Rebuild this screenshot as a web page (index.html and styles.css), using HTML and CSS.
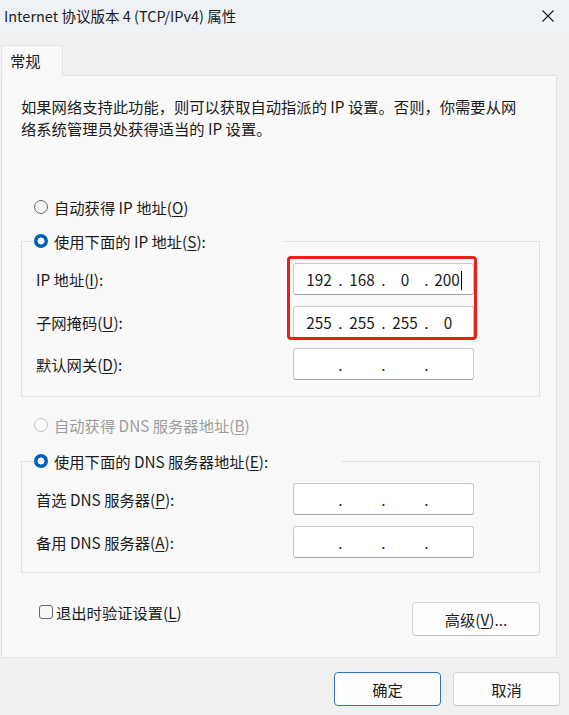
FILE: index.html
```html
<!DOCTYPE html>
<html lang="zh-CN">
<head>
<meta charset="utf-8">
<title>Internet 协议版本 4 (TCP/IPv4) 属性</title>
<link rel="stylesheet" href="styles.css">
</head>
<body>
<div class="window">
  <div class="titlebar">
    <span class="title">Internet 协议版本 4 (TCP/IPv4) 属性</span>
    <svg class="close" width="14" height="14" viewBox="0 0 14 14"><path d="M1.5 1.5 L12.5 12.5 M12.5 1.5 L1.5 12.5" stroke="#1b1b1b" stroke-width="1.1" fill="none"/></svg>
  </div>
  <div class="content">
    <div class="tabs"><div class="tab">常规</div></div>
    <div class="panel">
      <p class="desc">如果网络支持此功能，则可以获取自动指派的 IP 设置。否则，你需要从网络系统管理员处获得适当的 IP 设置。</p>

      <div class="radio first"><span class="rb"></span>自动获得 IP 地址(<u>O</u>)</div>

      <div class="group ipgroup">
        <div class="legend lg1"><span class="rb on"></span>使用下面的 IP 地址(<u>S</u>):</div>
        <div class="rows">
          <span class="lbl">IP 地址(<u>I</u>):</span>
          <div class="ip"><span class="oct">192</span><span class="dt">.</span><span class="oct">168</span><span class="dt">.</span><span class="oct">0</span><span class="dt">.</span><span class="oct">200<span class="caret"></span></span></div>
          <span class="lbl">子网掩码(<u>U</u>):</span>
          <div class="ip"><span class="oct">255</span><span class="dt">.</span><span class="oct">255</span><span class="dt">.</span><span class="oct">255</span><span class="dt">.</span><span class="oct">0</span></div>
          <span class="lbl">默认网关(<u>D</u>):</span>
          <div class="ip"><span class="oct"></span><span class="dt">.</span><span class="oct"></span><span class="dt">.</span><span class="oct"></span><span class="dt">.</span><span class="oct"></span></div>
        </div>
        <div class="highlight"></div>
      </div>

      <div class="radio disabled"><span class="rb"></span>自动获得 DNS 服务器地址(<u>B</u>)</div>

      <div class="group dnsgroup">
        <div class="legend lg2"><span class="rb on"></span>使用下面的 DNS 服务器地址(<u>E</u>):</div>
        <div class="rows">
          <span class="lbl">首选 DNS 服务器(<u>P</u>):</span>
          <div class="ip"><span class="oct"></span><span class="dt">.</span><span class="oct"></span><span class="dt">.</span><span class="oct"></span><span class="dt">.</span><span class="oct"></span></div>
          <span class="lbl">备用 DNS 服务器(<u>A</u>):</span>
          <div class="ip"><span class="oct"></span><span class="dt">.</span><span class="oct"></span><span class="dt">.</span><span class="oct"></span><span class="dt">.</span><span class="oct"></span></div>
        </div>
      </div>

      <div class="bottomrow">
        <div class="check"><span class="cb"></span>退出时验证设置(<u>L</u>)</div>
        <div class="btn adv">高级(<u>V</u>)...</div>
      </div>
    </div>
    <div class="footer">
      <div class="btn default">确定</div>
      <div class="btn">取消</div>
    </div>
  </div>
</div>
</body>
</html>
```

FILE: styles.css
```css
* { box-sizing: border-box; }
html, body { margin: 0; padding: 0; }
body {
  background: #f0f0f0;
  font-family: "Noto Sans CJK SC", "Noto Sans", sans-serif;
  font-size: 15.3px;
  color: #1b1b1b;
}
u { text-decoration: underline; text-underline-offset: 2px; text-decoration-thickness: 1px; }

.window { width: 569px; height: 715px; overflow: hidden; }

.titlebar {
  height: 33px;
  background: #eef2f7;
  display: flex;
  align-items: center;
  justify-content: space-between;
  padding: 0 14px 2px 4px;
}
.title { font-size: 14.5px; line-height: 20px; color: #1a1a1a; }
.close { display: block; }

.content { padding: 0 0 0 1px; }

.tabs { display: flex; padding-top: 12px; }
.tab {
  width: 62px;
  height: 31px;
  background: #f9f9f9;
  border: 1px solid #e3e3e3;
  border-bottom: none;
  padding-left: 8px;
  line-height: 29px;
  margin-bottom: -1px;
  position: relative;
  z-index: 1;
}

.panel {
  width: 556px;
  height: 583px;
  background: #f9f9f9;
  border: 1px solid #e2e2e2;
  padding: 19px 16px 0 19px;
}

.desc { margin: 0; line-height: 22px; width: 498px; }

.radio {
  display: flex;
  align-items: center;
  height: 20px;
  line-height: 20px;
  margin-left: 13px;
}
.radio.first { margin-top: 58px; }
.radio.disabled { margin-top: 18px; color: #9d9d9d; }

.rb {
  width: 14px;
  height: 14px;
  border-radius: 50%;
  border: 1px solid #6a6a6a;
  background: #f6f6f6;
  margin-right: 6px;
  flex: none;
}
.rb.on {
  border: none;
  background: radial-gradient(circle, #ffffff 0 3.2px, #005fb8 3.8px);
}
.disabled .rb { border-color: #c6c6c6; background: #fbfbfb; }

.group {
  position: relative;
  border: 1px solid #e1e1e1;
  padding: 0 0 16px 14px;
}
.ipgroup { margin-top: 24px; }
.dnsgroup { margin-top: 26px; padding-bottom: 14px; }

.legend {
  display: flex;
  align-items: center;
  height: 20px;
  line-height: 20px;
  margin: -11px 0 0 -2px;
  background: #f9f9f9;
}
.lg1 { width: 249px; }
.lg2 { width: 308px; }

.rows {
  display: grid;
  grid-template-columns: 257px 181px;
  row-gap: 10.5px;
  margin-top: 12px;
  align-items: center;
}
.lbl { line-height: 20px; }

.ip {
  height: 32px;
  background: #ffffff;
  border: 1px solid #c9c9c9;
  border-bottom-color: #a3a3a3;
  border-radius: 3px;
  display: flex;
  align-items: center;
  padding-left: 9px;
}
.oct { width: 32px; text-align: center; white-space: nowrap; }
.dt { width: 11px; text-align: center; }
.caret {
  display: inline-block;
  width: 1px;
  height: 19px;
  background: #000;
  vertical-align: -4px;
  margin-left: 1px;
}

.highlight {
  position: absolute;
  left: 265px;
  top: 14px;
  width: 190px;
  height: 84px;
  border: 3px solid #e8211b;
  border-radius: 4px;
}

.bottomrow {
  display: flex;
  justify-content: space-between;
  align-items: flex-start;
  margin-top: 29.5px;
}
.check {
  display: flex;
  align-items: center;
  height: 20px;
  margin-left: 18px;
}
.cb {
  width: 14px;
  height: 14px;
  border: 1px solid #6a6a6a;
  border-radius: 3px;
  background: #f6f6f6;
  margin-right: 3px;
}

.btn {
  height: 34px;
  background: #fdfdfd;
  border: 1px solid #d6d6d6;
  border-bottom-color: #bfbfbf;
  border-radius: 4px;
  display: flex;
  align-items: center;
  justify-content: center;
}
.adv { width: 128px; }

.footer {
  display: flex;
  justify-content: flex-end;
  gap: 12px;
  margin-top: 14px;
  padding-right: 9px;
}
.footer .btn { width: 107px; }
.btn.default { border: 1px solid #2f72b8; }
```
